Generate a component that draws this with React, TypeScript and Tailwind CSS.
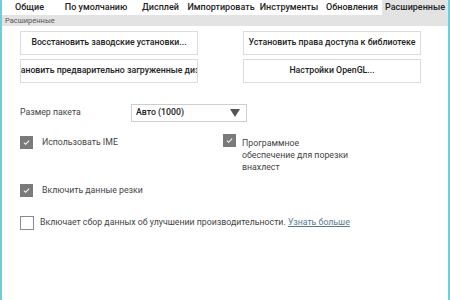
import React from "react";

const tabs = [
  { label: "Общие", w: "w-[55px]" },
  { label: "По умолчанию", w: "w-[78px]" },
  { label: "Дисплей", w: "w-[51px]" },
  { label: "Импортировать", w: "w-[70px]" },
  { label: "Инструменты", w: "w-[66px]" },
  { label: "Обновления", w: "w-[60px]" },
  { label: "Расширенные", w: "w-[66px]", active: true },
];

const Check: React.FC<{ checked: boolean }> = ({ checked }) =>
  checked ? (
    <span className="flex h-[13px] w-[13px] shrink-0 items-center justify-center bg-[#7a7a7a]">
      <svg viewBox="0 0 12 12" className="h-[9px] w-[9px]" aria-hidden="true">
        <path d="M2.5 6.2l2.3 2.2 4.7-4.8" fill="none" stroke="#fff" strokeWidth={1.4} />
      </svg>
    </span>
  ) : (
    <span className="h-[14px] w-[14px] shrink-0 border border-[#8a8a8a] bg-white" />
  );

const Button: React.FC<{ children: React.ReactNode }> = ({ children }) => (
  <div className="flex h-[24px] w-[178px] items-center justify-center overflow-hidden whitespace-nowrap border border-[#dcdcdc] bg-white text-[8.75px] font-medium text-[#222]">
    {children}
  </div>
);

export default function App() {
  return (
    <div
      className="h-[300px] w-[450px] overflow-hidden border-x-2 border-[#6ccfdc] bg-white text-[#444]"
      style={{ fontFamily: 'Roboto, "Liberation Sans", sans-serif' }}
    >
      <div className="flex h-[15px]">
        {tabs.map((t) => (
          <div
            key={t.label}
            className={`${t.w} flex items-center justify-center whitespace-nowrap text-[9px] font-medium text-[#222] ${t.active ? "bg-[#e3e3e3]" : ""}`}
          >
            {t.label}
          </div>
        ))}
      </div>
      <div className="flex h-[11px] items-center bg-[#e3e3e3] pl-[3px] text-[7.5px] text-[#555]">
        Расширенные
      </div>

      <div className="grid grid-cols-[178px_178px] gap-x-[45px] gap-y-[4px] pl-[18px] pt-[5px]">
        <Button>Восстановить заводские установки...</Button>
        <Button>Установить права доступа к библиотеке</Button>
        <Button>Восстановить предварительно загруженные дизайны</Button>
        <Button>Настройки OpenGL...</Button>
      </div>

      <div className="mt-[21px] flex items-center pl-[18px] text-[8.75px]">
        <span className="w-[111px]">Размер пакета</span>
        <div className="flex h-[18px] w-[116px] items-center justify-between border border-[#cfcfcf] pl-[4px] pr-[6px]">
          <span className="font-medium text-[#222]">Авто (1000)</span>
          <svg viewBox="0 0 10 8" className="h-[8px] w-[10px]" aria-hidden="true">
            <path d="M0 0h10L5 8z" fill="#555" />
          </svg>
        </div>
      </div>

      <div className="mt-[14px] grid grid-cols-[203px_1fr] pl-[18px] text-[8.75px]">
        <div className="flex items-start gap-[9px]">
          <Check checked />
          <span className="leading-[12px]">Использовать IME</span>
        </div>
        <div className="-mt-[2px] flex items-start gap-[6px]">
          <Check checked />
          <span className="mt-[3px] leading-[12px]">
            Программное
            <br />
            обеспечение для порезки
            <br />
            внахлест
          </span>
        </div>
      </div>

      <div className="mt-[11px] flex items-start gap-[9px] pl-[18px] text-[8.75px]">
        <Check checked />
        <span className="leading-[12px]">Включить данные резки</span>
      </div>

      <div className="mt-[19px] flex items-center gap-[6px] pl-[18px] text-[8.75px]">
        <Check checked={false} />
        <span className="whitespace-nowrap">
          Включает сбор данных об улучшении производительности.{" "}
          <span className="text-[#5a7a90] underline">Узнать больше</span>
        </span>
      </div>
    </div>
  );
}
